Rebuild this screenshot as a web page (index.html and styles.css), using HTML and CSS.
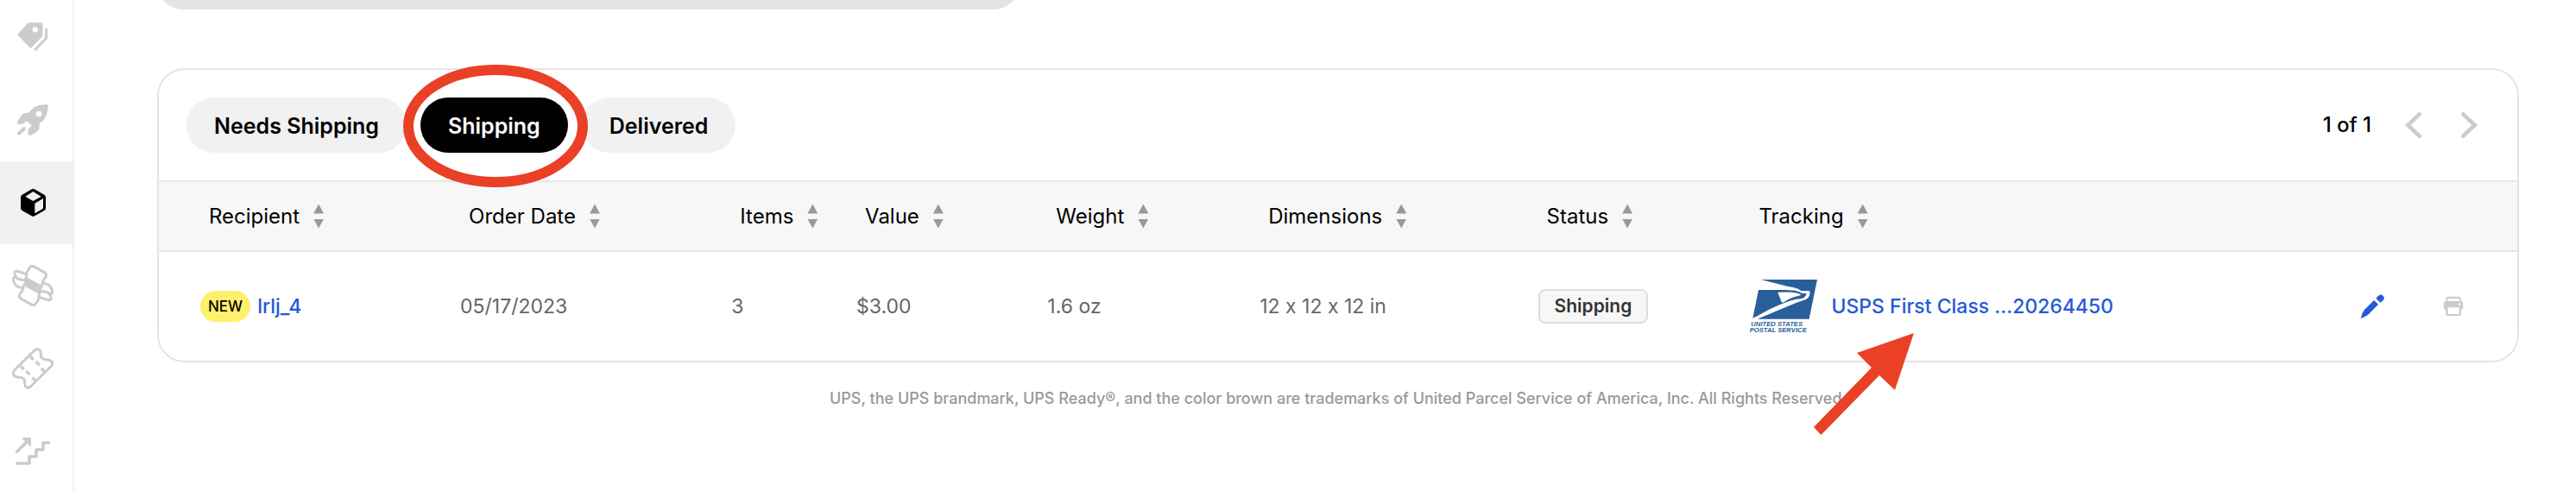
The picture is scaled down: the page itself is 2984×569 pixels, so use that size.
FILE: index.html
```html
<!DOCTYPE html>
<html lang="en">
<head>
<meta charset="utf-8">
<title>Shipments</title>
<link rel="stylesheet" href="styles.css">
</head>
<body>
<div class="app">
  <nav class="sidebar" aria-label="Main">
    <a class="nav-item" href="#tags" aria-label="Listings"><svg class="nav-icon" viewBox="42 57 144 144"><path fill="currentColor" fill-rule="evenodd" d="M98 79H143Q148 79 148 84V126L107 168L60 121ZM113 103a9.500 9.500 0 1 0 19 0a9.500 9.500 0 1 0 -19 0Z"/><path class="stroke" stroke-width="9" d="M161 102V132L123 172"/></svg></a>
    <a class="nav-item" href="#boost" aria-label="Promote"><svg class="nav-icon" viewBox="42 345 144 144"><path fill="currentColor" fill-rule="evenodd" d="M163 363Q138 364 121 371Q113 375 99 393H88Q80 393 75 400L60 424Q58 433 68 433Q80 434 88 423L95 422L110 436L99 448Q96 458 98 468Q103 474 110 469L131 455Q137 451 137 443V430L152 417Q164 402 168 368Q168 363 163 363ZM125 396a10 10 0 1 0 20 0a10 10 0 1 0 -20 0Z"/><path class="stroke" stroke-width="12" d="M66 464L84 447"/></svg></a>
    <a class="nav-item nav-item-active" href="#shipments" aria-label="Shipments" aria-current="page"><svg class="nav-icon" viewBox="42 633 144 144"><path fill="currentColor" fill-rule="evenodd" d="M110 658Q115 655 120 658L154 677Q159 680 159 686V724Q159 729 154 732L120 751Q115 754 110 751L77 732Q72 729 72 724V686Q72 680 77 677ZM115 666L88 683L115 699L143 683ZM121 707V742L147 727Q150 725 150 721V690Z"/></svg></a>
    <a class="nav-item" href="#payouts" aria-label="Payouts"><svg class="nav-icon" viewBox="42 66 144 144"><path fill="currentColor" d="M90 107L147 139L138 169L81 137Z"/><g class="stroke" stroke-width="9"><path id="note-half" d="M88 116Q94 104 93 94Q95 88 103 76Q108 68 116 71L154 92Q163 97 160 106L150 121Q147 128 145 142M90 98Q72 91 58 88Q50 87 51 95Q53 106 59 112Q68 117 86 119M59 112Q47 106 46 115Q47 132 60 141Q68 145 80 146"/><use href="#note-half" transform="rotate(180 114 138)"/></g></svg></a>
    <a class="nav-item" href="#coupons" aria-label="Coupons"><svg class="nav-icon" viewBox="42 354 144 144"><path class="stroke" stroke-width="9" d="M50 432L121 362Q131 355 139 363Q143 369 142 384Q147 395 162 395Q174 395 180 402Q184 409 179 417L106 489Q97 496 89 489Q85 483 86 468Q81 457 67 457Q53 457 48 450Q44 440 50 432Z"/><path class="stroke" stroke-width="11" d="M75 421l5 5M94 438l6 6M115 461l5 4M108 387l5 5M128 405l6 6M147 429l5 5"/></svg></a>
    <a class="nav-item" href="#levels" aria-label="Levels"><svg class="nav-icon" viewBox="42 642 144 144"><path class="stroke" stroke-width="11" d="M59 756H102V732H126V708H150V684H169M59 715L97 677"/><path fill="currentColor" d="M82 666H105Q108 666 108 669V693Q108 699 103 695L79 672Q75 667 82 666Z"/></svg></a>
  </nav>
  <main class="main">
    <div class="banner"></div>
    <section class="card">
      <header class="toolbar">
        <div class="tabs">
          <button class="tab" type="button">Needs Shipping</button>
          <div class="tab-marked">
            <button class="tab tab-active" type="button">Shipping</button>
            <svg class="ring" viewBox="0 0 216 144"><ellipse cx="108" cy="72" rx="101" ry="65"/></svg>
          </div>
          <button class="tab" type="button">Delivered</button>
        </div>
        <div class="pager">
          <span class="pager-text">1 of 1</span>
          <button class="pager-button" type="button" aria-label="Previous page"><svg viewBox="435 207 66 96"><path d="M488 217L448 255L488 293"/></svg></button>
          <button class="pager-button" type="button" aria-label="Next page"><svg viewBox="627 207 66 96"><path d="M640 217L680 255L640 293"/></svg></button>
        </div>
      </header>
      <table class="orders">
        <colgroup><col class="col-recipient"><col class="col-date"><col class="col-items"><col class="col-value"><col class="col-weight"><col class="col-dimensions"><col class="col-status"><col class="col-tracking"><col class="col-actions"></colgroup>
        <thead>
          <tr>
            <th><button class="sort" type="button">Recipient<span class="arrows"></span></button></th>
            <th><button class="sort" type="button">Order Date<span class="arrows"></span></button></th>
            <th><button class="sort" type="button">Items<span class="arrows"></span></button></th>
            <th><button class="sort" type="button">Value<span class="arrows"></span></button></th>
            <th><button class="sort" type="button">Weight<span class="arrows"></span></button></th>
            <th><button class="sort" type="button">Dimensions<span class="arrows"></span></button></th>
            <th><button class="sort" type="button">Status<span class="arrows"></span></button></th>
            <th><button class="sort" type="button">Tracking<span class="arrows"></span></button></th>
            <th></th>
          </tr>
        </thead>
        <tbody>
          <tr>
            <td><div class="recipient"><span class="badge">NEW</span><a class="link" href="#lrlj_4">lrlj_4</a></div></td>
            <td>05/17/2023</td>
            <td>3</td>
            <td>$3.00</td>
            <td>1.6 oz</td>
            <td>12 x 12 x 12 in</td>
            <td><span class="status">Shipping</span></td>
            <td>
              <div class="tracking">
                <svg class="usps" viewBox="78 57 234 186" role="img">
                  <path fill="#285f9b" d="M117 57H312L284 194H103L240 137Q268 128 276 123Q287 116 286 98H258Q251 86 208 80Z"/>
                  <path fill="#285f9b" d="M108 93H211Q236 93 248 99Q264 102 281 102Q280 115 273 119Q257 124 234 132L91 190L88 192Z"/>
                  <path fill="#fff" d="M175 101Q220 99 244 104Q253 107 256 111L226 119Q214 124 193 137L188 135Z"/>
                  <path fill="#fff" d="M88 194Q148 155 214 132Q236 124 257 123Q270 120 275 107L271 105H259Q250 97 236 94H211L212 91Q240 90 256 96H283Q289 101 285 111Q282 122 272 126Q241 134 207 149L103 194Z"/>
                  <path fill="none" stroke="#285f9b" stroke-width="2" d="M253 107H272L268 114Q246 116 229 122"/>
                  <text class="usps-text" x="82" y="220">UNITED STATES</text>
                  <text class="usps-text" x="77" y="241">POSTAL SERVICE</text>
                </svg>
                <a class="link" href="#tracking">USPS First Class ...20264450</a>
                <svg class="pointer" viewBox="0 0 116 118"><path d="M116 0L94 66L76 49L8.500 118L0 109L67 40L50 23Z"/></svg>
              </div>
            </td>
            <td>
              <div class="actions">
                <button class="icon-button edit" type="button" aria-label="Edit"><svg viewBox="283 842 84 84"><path fill="currentColor" d="M331 863L346 877L313 911Q305 919 285 926Q289 907 297 897ZM338 856L345 848Q354 839 362 847Q370 855 363 863L353 871Z"/></svg></button>
                <button class="icon-button print" type="button" aria-label="Print"><svg viewBox="564 843 84 84"><path fill="currentColor" fill-rule="evenodd" d="M580 866V858Q580 851 587 851H625Q632 851 632 858V866Q640 867 640 875V890Q640 896 633 897V911Q633 918 626 918H586Q579 918 579 911V897Q572 896 572 890V875Q572 867 580 866ZM586 867H627V858H586ZM587 889V912H626V889ZM624 878a4 4 0 1 0 8 0a4 4 0 1 0 -8 0Z"/></svg></button>
              </div>
            </td>
          </tr>
        </tbody>
      </table>
    </section>
    <footer class="legal">UPS, the UPS brandmark, UPS Ready®, and the color brown are trademarks of United Parcel Service of America, Inc. All Rights Reserved.</footer>
  </main>
</div>
</body>
</html>
```
FILE: styles.css
```css
* { box-sizing: border-box; }

body {
  margin: 0;
  background: #fff;
  color: #000;
  font-family: Inter, "Liberation Sans", sans-serif;
  font-size: 24px;
  font-feature-settings: "calt" 0;
  line-height: 32px;
}

button {
  margin: 0;
  border: 0;
  padding: 0;
  background: none;
  color: inherit;
  font: inherit;
  cursor: pointer;
}

svg { display: block; }

.app {
  display: flex;
  height: 100vh;
  overflow: hidden;
}

.sidebar {
  flex: none;
  width: 86px;
  margin-top: -5px;
  border-right: 2px solid #f1f1f1;
}

.nav-item {
  display: flex;
  align-items: center;
  height: 96px;
  padding-left: 14px;
  color: #ccc;
}

.nav-item-active {
  background: #f1f1f1;
  color: #000;
}

.nav-icon { width: 48px; height: 48px; }

.stroke {
  fill: none;
  stroke: currentColor;
  stroke-linecap: round;
  stroke-linejoin: round;
}

.main {
  flex: 1;
  min-width: 0;
  padding: 0 66px 0 96px;
}

.banner {
  width: 36.5%;
  height: 64px;
  margin-top: -53px;
  border-radius: 30px;
  background: #e4e4e4;
}

.card {
  margin-top: 68px;
  border: 2px solid #e5e5e5;
  border-radius: 32px;
}

.toolbar {
  display: flex;
  align-items: center;
  justify-content: space-between;
  padding: 32px 45px 32px 32px;
}

.tabs { display: flex; gap: 16px; }

.tab {
  display: block;
  height: 64px;
  padding: 1px 32px 0;
  border-radius: 32px;
  background: #f1f1f1;
  font-size: 25px;
  font-weight: 600;
}

.tab-active { background: #000; color: #fff; }

.tab-marked { position: relative; }

.ring {
  position: absolute;
  top: -39px;
  left: -21px;
  width: 216px;
  height: 144px;
  pointer-events: none;
}

.ring ellipse {
  fill: none;
  stroke: #ea4025;
  stroke-width: 12;
}

.pager { display: flex; align-items: center; }
.pager-text { margin-right: 38px; font-weight: 500; }
.pager-button + .pager-button { margin-left: 42px; }
.pager-button svg { width: 22px; height: 32px; }

.pager-button path {
  fill: none;
  stroke: #ccc;
  stroke-width: 14;
  stroke-linecap: round;
}

.orders {
  width: 100%;
  border-collapse: separate;
  border-spacing: 0;
  table-layout: fixed;
}

.col-recipient { width: 11.9%; }
.col-date { width: 11.5%; }
.col-items { width: 5.3%; }
.col-value { width: 8.1%; }
.col-weight { width: 9%; }
.col-dimensions { width: 11.8%; }
.col-status { width: 9%; }
.col-tracking { width: 24.4%; }
.col-actions { width: 9%; }

th {
  height: 83px;
  padding: 0 0 0 34px;
  border-top: 2px solid #e5e5e5;
  border-bottom: 2px solid #e5e5e5;
  background: #f7f7f7;
  font-weight: 400;
  text-align: left;
}

th:first-child { padding-left: 58px; }

.sort {
  display: flex;
  align-items: center;
  gap: 16px;
  white-space: nowrap;
}

.arrows {
  display: flex;
  flex-direction: column;
  gap: 6px;
}

.arrows::before,
.arrows::after {
  content: "";
  width: 12px;
  height: 11px;
  background: #999;
  clip-path: polygon(50% 0, 100% 100%, 0 100%);
}

.arrows::after { clip-path: polygon(0 0, 100% 0, 50% 100%); }

td {
  height: 126px;
  padding: 0 0 0 24px;
  color: #666;
  font-size: 23px;
  white-space: nowrap;
}

td:first-child { padding-left: 48px; }

.recipient { display: flex; align-items: center; gap: 8px; }

.badge {
  height: 36px;
  padding: 0 9px;
  border-radius: 18px;
  background: #fff06c;
  color: #000;
  font-size: 17px;
  font-weight: 500;
  line-height: 36px;
}

.link {
  color: #2459dc;
  font-weight: 500;
  text-decoration: none;
}

.status {
  display: inline-block;
  padding: 2px 17px;
  border: 2px solid #ddd;
  border-radius: 8px;
  background: #f7f7f7;
  color: #333;
  font-size: 21px;
  font-weight: 600;
}

.tracking {
  position: relative;
  display: flex;
  align-items: center;
  gap: 16px;
}

.usps { width: 78px; height: 62px; }

.usps-text {
  fill: #285f9b;
  font: italic bold 23px "Liberation Sans", sans-serif;
}

.pointer {
  position: absolute;
  top: 62px;
  left: 74px;
  width: 116px;
  height: 118px;
  fill: #ea4025;
  pointer-events: none;
}

.actions {
  display: flex;
  justify-content: flex-end;
  gap: 66px;
  padding-right: 60px;
}

.icon-button svg { width: 28px; height: 28px; }
.edit { color: #2459dc; }
.print { color: #ccc; }

.legal {
  padding-top: 26px;
  color: #999;
  font-size: 18px;
  font-weight: 500;
  text-align: center;
}
```
